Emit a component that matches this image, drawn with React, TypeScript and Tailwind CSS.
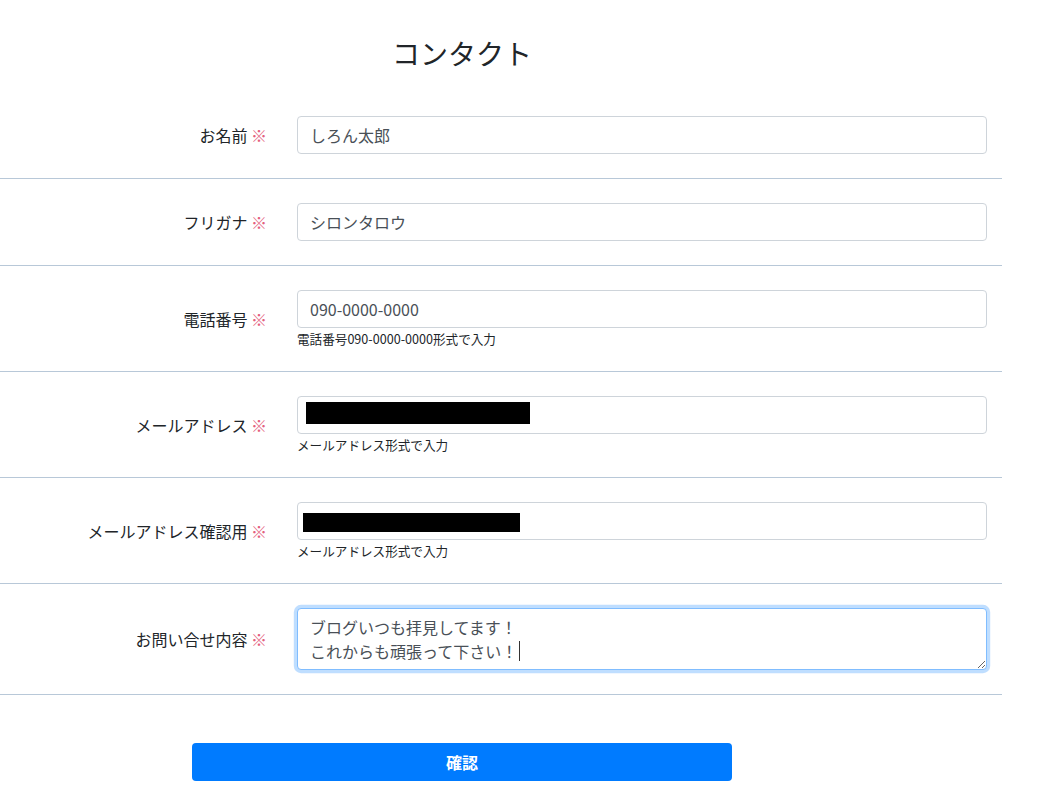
import type { ReactNode } from 'react';

const FONT = "font-['Noto_Sans_CJK_JP','Noto_Sans',sans-serif]";

const Row = ({ label, children }: { label: string; children: ReactNode }) => (
  <div className="flex items-center border-b border-[#b8c8d8] py-[24px]">
    <div className="w-[282px] shrink-0 pr-[15px] text-right text-[16px] leading-[24px] text-[#212529]">
      {label} <span className="text-[#e4607d]">※</span>
    </div>
    <div className="flex-1 px-[15px]">{children}</div>
  </div>
);

const Input = ({ value, redact }: { value?: string; redact?: string }) => (
  <div className="relative">
    <input
      type="text"
      readOnly
      value={value ?? ''}
      className="block h-[38px] w-full rounded-[4px] border border-[#ced4da] bg-white px-[12px] text-[16px] leading-[24px] text-[#495057] outline-none"
    />
    {redact && <div className={`absolute bg-black ${redact}`} />}
  </div>
);

const Help = ({ children }: { children: ReactNode }) => (
  <p className="mt-[2px] text-[12.6px] leading-[17px] text-[#212529]">{children}</p>
);

export default function App() {
  return (
    <div className={`min-h-screen bg-white ${FONT}`}>
      <div className="w-[1002px]">
        <h3 className="w-[924px] pt-[36px] mb-[22px] text-center text-[28px] leading-[34px] font-normal text-[#212529]">
          コンタクト
        </h3>
        <Row label="お名前">
          <Input value="しろん太郎" />
        </Row>
        <Row label="フリガナ">
          <Input value="シロンタロウ" />
        </Row>
        <Row label="電話番号">
          <Input value="090-0000-0000" />
          <Help>電話番号090-0000-0000形式で入力</Help>
        </Row>
        <Row label="メールアドレス">
          <Input redact="left-[9px] top-[6px] h-[22px] w-[224px]" />
          <Help>メールアドレス形式で入力</Help>
        </Row>
        <Row label="メールアドレス確認用">
          <Input redact="left-[6px] top-[11px] h-[19px] w-[217px]" />
          <Help>メールアドレス形式で入力</Help>
        </Row>
        <Row label="お問い合せ内容">
          <div className="relative">
            <textarea
              readOnly
              rows={2}
              value={'ブログいつも拝見してます！\nこれからも頑張って下さい！'}
              className="block h-[62px] w-full rounded-[4px] border border-[#80bdff] bg-white px-[12px] py-[6px] text-[16px] leading-[24px] text-[#495057] shadow-[0_0_0_3.2px_rgba(0,123,255,0.25)] outline-none"
            />
            {/* caret */}
            <div className="absolute left-[222px] top-[33px] h-[20px] w-px bg-[#333]" />
          </div>
        </Row>
        <div className="mt-[48px] pl-[192px]">
          <button
            type="button"
            className="h-[38px] w-[540px] rounded-[4px] bg-[#007bff] text-[16px] font-semibold text-white"
          >
            確認
          </button>
        </div>
      </div>
    </div>
  );
}
